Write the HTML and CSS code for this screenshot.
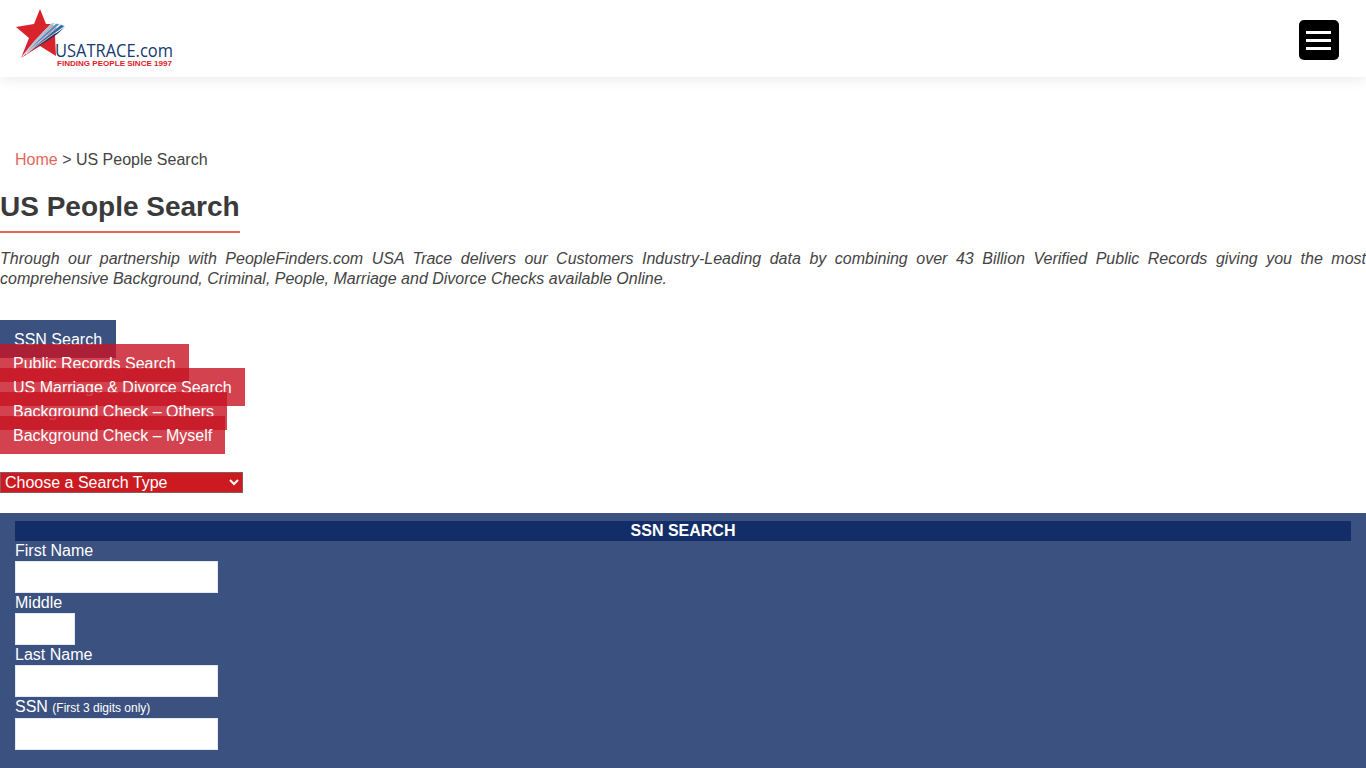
FILE: index.html
```html
<!DOCTYPE html>
<html lang="en">
<head>
  <meta charset="UTF-8" />
  <meta name="viewport" content="width=device-width, initial-scale=1.0"/>
  <title>US People Search</title>
  <link rel="stylesheet" href="styles.css">
</head>
<body>
  <header class="site-header">
    <a class="logo" href="#">
      <svg width="170" height="62" viewBox="0 0 170 62" aria-label="USA Trace logo">
        <polygon points="25,0 31,15 36,15 42,19 40,27 41,47 25,37 6,49 14,29 1,18 19,15" fill="#d8232a"/>
        <path d="M5,50 Q20,30 37,14 L40,14 Q22,31 5,50 Z" fill="#9cc0dc" stroke="#fff" stroke-width=".4"/>
        <path d="M8,47 Q24,29 41,14.500 L45,15 Q26,31 8,47 Z" fill="#4d8fc0" stroke="#fff" stroke-width=".6"/>
        <path d="M11,45 Q28,30 46,15.500 L50,17 Q30,31 11,45 Z" fill="#2a6aa0" stroke="#fff" stroke-width=".6"/>
        <path d="M15,42 Q32,31 50,18 Q42,26 34,31 Q24,37 15,42 Z" fill="#16396f"/>
        <text class="logo-name" x="40" y="48" textLength="118" lengthAdjust="spacingAndGlyphs">USATRACE.com</text>
        <text class="logo-tag" x="42" y="56.500" textLength="115" lengthAdjust="spacingAndGlyphs">FINDING PEOPLE SINCE 1997</text>
      </svg>
    </a>
    <button class="menu-btn" type="button" aria-label="Menu">
      <span></span><span></span><span></span>
    </button>
  </header>

  <main>
    <p class="breadcrumb"><a href="#">Home</a> &gt; US People Search</p>
    <h1>US People Search</h1>
    <p class="intro">Through our partnership with PeopleFinders.com USA Trace delivers our Customers Industry-Leading data by combining over 43 Billion Verified Public Records giving you the most comprehensive Background, Criminal, People, Marriage and Divorce Checks available Online.</p>

    <ul class="tabs">
      <li><a class="active" href="#">SSN Search</a></li>
      <li><a href="#">Public Records Search</a></li>
      <li><a href="#">US Marriage &amp; Divorce Search</a></li>
      <li><a href="#">Background Check – Others</a></li>
      <li><a href="#">Background Check – Myself</a></li>
    </ul>

    <select class="type-select">
      <option>Choose a Search Type</option>
    </select>

    <form class="search-panel" autocomplete="off">
      <h2>SSN SEARCH</h2>
      <label for="first">First Name</label>
      <input type="text" id="first" />
      <label for="middle">Middle</label>
      <input class="short" type="text" id="middle" />
      <label for="last">Last Name</label>
      <input type="text" id="last" />
      <label class="ssn-label" for="ssn">SSN <small>(First 3 digits only)</small></label>
      <input type="text" id="ssn" />
    </form>
  </main>
</body>
</html>
```

FILE: styles.css
```css
* {
  margin: 0;
  padding: 0;
  box-sizing: border-box;
}

body {
  font-family: "Liberation Sans", Arial, sans-serif;
  font-size: 16px;
  line-height: 24px;
  color: #444;
  background: #fff;
  overflow-x: hidden;
}

.site-header {
  height: 77px;
  padding: 9px 27px 0 15px;
  display: flex;
  justify-content: space-between;
  align-items: flex-start;
  background: #fff;
  box-shadow: 0 3px 12px rgba(0, 0, 0, 0.08);
}

.logo {
  display: block;
  height: 62px;
}

.logo-name {
  font-family: "Open Sans", sans-serif;
  font-size: 18px;
  fill: #16396f;
}

.logo-tag {
  font-family: "Liberation Sans", sans-serif;
  font-size: 7px;
  font-weight: bold;
  fill: #e0202a;
}

.menu-btn {
  width: 40px;
  height: 40px;
  margin-top: 11px;
  padding-right: 1px;
  display: flex;
  flex-direction: column;
  justify-content: center;
  align-items: center;
  gap: 5px;
  background: #000;
  border: none;
  border-radius: 5px;
}

.menu-btn span {
  width: 25px;
  height: 3px;
  background: #fff;
}

.breadcrumb {
  margin-top: 71px;
  padding-left: 15px;
}

.breadcrumb a {
  color: #e2675a;
  text-decoration: none;
}

h1 {
  display: inline-block;
  margin-top: 17px;
  padding-bottom: 6px;
  font-size: 28px;
  line-height: 36px;
  color: #3a3a3a;
  border-bottom: 2px solid #e2675a;
}

.intro {
  margin-top: 16px;
  font-style: italic;
  line-height: 20px;
  text-align: justify;
}

.tabs {
  margin-top: 39px;
  list-style: none;
}

.tabs a {
  padding: 11px 13px 10px;
  color: #fff;
  text-decoration: none;
  background: rgba(200, 20, 35, 0.8);
}

.tabs a.active {
  padding: 11px 14px 10px;
  background: #3b5180;
}

.type-select {
  display: block;
  width: 243px;
  height: 21px;
  margin-top: 24px;
  font-family: inherit;
  font-size: 16px;
  color: #fff;
  background: #cb1a20;
  border: 1px solid #8a5a5c;
}

.search-panel {
  margin-top: 20px;
  padding: 8px 15px 18px;
  background: #3b5180;
  color: #fff;
}

.search-panel h2 {
  height: 20px;
  font-size: 16px;
  line-height: 20px;
  text-align: center;
  background: #132d69;
}

.search-panel label {
  display: block;
  height: 20px;
  line-height: 20px;
}

.search-panel .ssn-label {
  height: 21px;
}

.search-panel small {
  font-size: 12px;
}

.search-panel input {
  display: block;
  width: 203px;
  height: 32px;
  background: #fff;
  border: 1px solid #e4e9f5;
}

.search-panel input.short {
  width: 60px;
}
```
